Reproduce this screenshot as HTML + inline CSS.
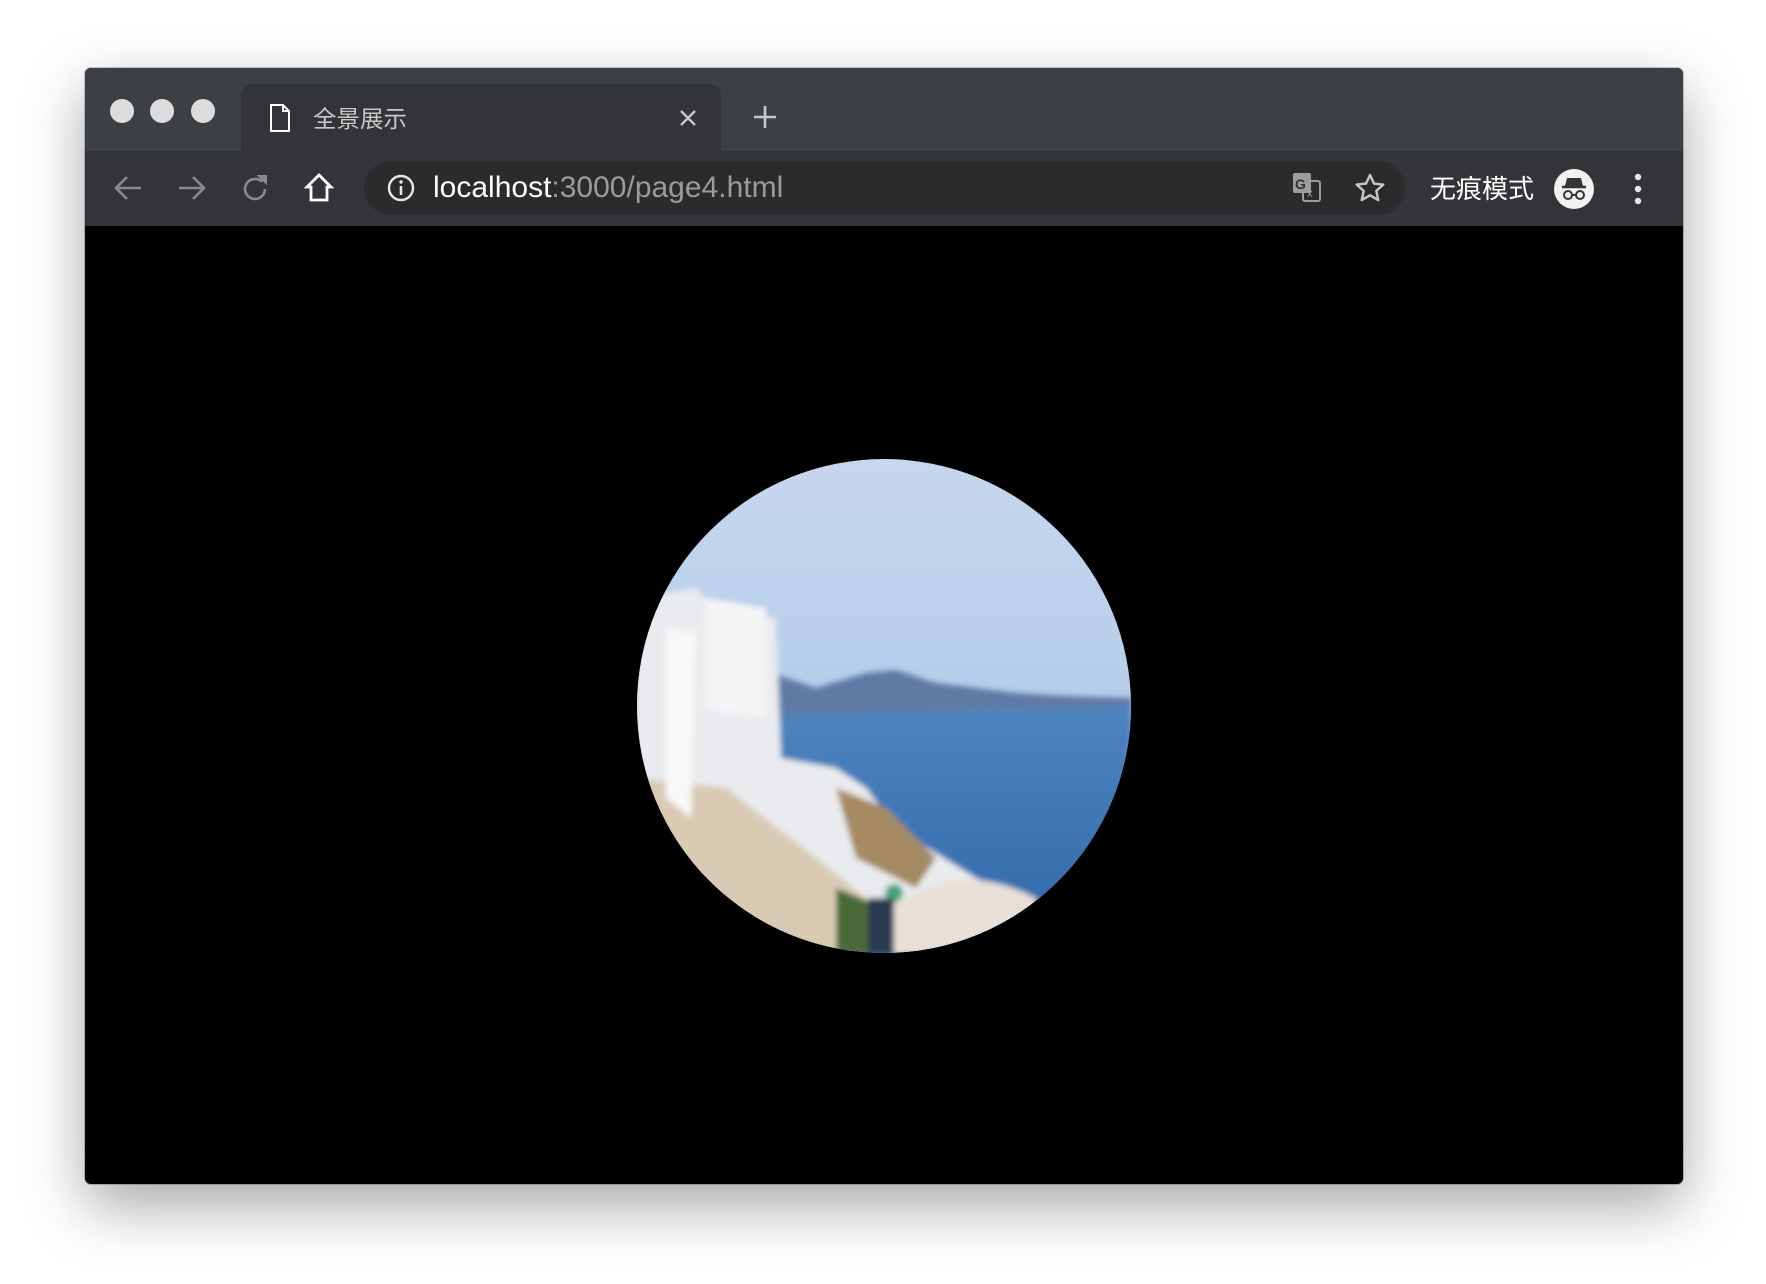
<!DOCTYPE html>
<html><head><meta charset="utf-8"><style>
*{margin:0;padding:0;box-sizing:border-box}
body{width:1766px;height:1284px;background:#fff;position:relative;overflow:hidden;font-family:"Liberation Sans","Noto Sans CJK SC",sans-serif}
.win{position:absolute;left:85px;top:68px;width:1598px;height:1116px;background:#000;border-radius:6px;overflow:hidden;box-shadow:0 22px 60px rgba(0,0,0,.35),0 0 0 1px rgba(0,0,0,.2)}
.title{position:absolute;left:0;top:0;width:100%;height:83px;background:#3c3f43}
.tl{position:absolute;top:99px;width:24px;height:24px;border-radius:50%;background:#dcdcdc}
.tab{position:absolute;left:156px;top:16px;width:480px;height:67px;background:#323437;border-radius:12px 12px 0 0}
.tool{position:absolute;left:0;top:83px;width:100%;height:75px;background:#323437}
.url{position:absolute;left:279px;top:93px;width:1041px;height:54px;background:#2a2b2d;border-radius:27px}
.ab{position:absolute}
</style></head><body>
<div class="win">
<div class="title"></div>
<div class="tl" style="left:25px;top:31px"></div>
<div class="tl" style="left:65px;top:31px"></div>
<div class="tl" style="left:106px;top:31px"></div>
<div class="tab"></div>
<svg class="ab" style="left:184px;top:35px" width="22" height="30" viewBox="0 0 22 30"><path d="M2 2h12l6 6v20H2z M14 2v6h6" fill="none" stroke="#fff" stroke-width="2"/></svg>
<div class="ab" style="left:228px;top:32px;font-size:23.5px;color:#c8c8c8">全景展示</div>
<svg class="ab" style="left:592px;top:39px" width="22" height="22"><path d="M4 4L18 18M18 4L4 18" stroke="#c8c8c8" stroke-width="2.4"/></svg>
<svg class="ab" style="left:666px;top:35px" width="28" height="28"><path d="M14 3v22M3 14h22" stroke="#c8c8c8" stroke-width="2.6"/></svg>
<div class="tool"></div>
<div class="url"></div>
<svg class="ab" style="left:26px;top:106px" width="34" height="28"><path d="M30 14H6M16 3L5 14l11 11" fill="none" stroke="#8a8b8d" stroke-width="2.6"/></svg>
<svg class="ab" style="left:90px;top:106px" width="34" height="28"><path d="M4 14h24M18 3l11 11-11 11" fill="none" stroke="#8a8b8d" stroke-width="2.6"/></svg>
<svg class="ab" style="left:155px;top:105px" width="32" height="32"><path d="M25 16a10 10 0 1 1-3-7.2" fill="none" stroke="#8a8b8d" stroke-width="2.6"/><path d="M19 3h7v7z" fill="#8a8b8d" stroke="#8a8b8d" stroke-width="2"/></svg>
<svg class="ab" style="left:218px;top:104px" width="32" height="32"><path d="M16 3L4 15h4v13h16V15h4z" fill="none" stroke="#fff" stroke-width="2.8" stroke-linejoin="miter"/></svg>
<svg class="ab" style="left:301px;top:105px" width="30" height="30"><circle cx="15" cy="15" r="12" fill="none" stroke="#e8e8e8" stroke-width="2.4"/><path d="M15 13v9" stroke="#e8e8e8" stroke-width="2.6"/><circle cx="15" cy="9" r="1.7" fill="#e8e8e8"/></svg>
<div class="ab" style="left:348px;top:103px;font-size:30px;color:#fff">localhost<span style="color:#9a9b9d">:3000/page4.html</span></div>
<svg class="ab" style="left:1207px;top:104px" width="30" height="32"><rect x="1" y="1" width="18" height="20" rx="2" fill="#9c9d9f"/><rect x="11" y="9" width="17" height="20" rx="2" fill="none" stroke="#9c9d9f" stroke-width="2"/><text x="3" y="17" font-size="14" font-weight="bold" fill="#323437" font-family="Liberation Sans">G</text><text x="15" y="25" font-size="11" fill="#9c9d9f" font-family="Liberation Sans">x</text></svg>
<svg class="ab" style="left:1269px;top:104px" width="32" height="32"><path d="M16 3l4 8.6 9.3 1-7 6.3 2 9.2L16 23.3 7.7 28.1l2-9.2-7-6.3 9.3-1z" fill="none" stroke="#c8c8c8" stroke-width="2.4" stroke-linejoin="round"/></svg>
<div class="ab" style="left:1345px;top:101px;font-size:26px;color:#fff">无痕模式</div>
<svg class="ab" style="left:1469px;top:101px" width="40" height="40"><circle cx="20" cy="20" r="20" fill="#f1f1f1"/><path d="M13 9h14l2 8H11z" fill="#323437"/><path d="M8 18h24" stroke="#323437" stroke-width="2.5"/><circle cx="14" cy="26" r="4" fill="none" stroke="#323437" stroke-width="2"/><circle cx="26" cy="26" r="4" fill="none" stroke="#323437" stroke-width="2"/><path d="M18 26h4" stroke="#323437" stroke-width="2"/></svg>
<svg class="ab" style="left:1545px;top:104px" width="16" height="34"><circle cx="8" cy="5" r="3.2" fill="#e8e8e8"/><circle cx="8" cy="17" r="3.2" fill="#e8e8e8"/><circle cx="8" cy="29" r="3.2" fill="#e8e8e8"/></svg>
<svg class="ab" style="left:551px;top:390px" width="496" height="496" viewBox="0 0 496 496">
<defs>
<clipPath id="c"><circle cx="248" cy="248" r="247"/></clipPath>
<linearGradient id="sky" x1="0" y1="0" x2="0" y2="1"><stop offset="0" stop-color="#c6d7ee"/><stop offset=".5" stop-color="#b4cdea"/><stop offset="1" stop-color="#c3d6ec"/></linearGradient>
<linearGradient id="sea" x1="0" y1="0" x2="0" y2="1"><stop offset="0" stop-color="#4f86c0"/><stop offset="1" stop-color="#2d66a8"/></linearGradient>
<filter id="b"><feGaussianBlur stdDeviation="3"/></filter>
</defs>
<g clip-path="url(#c)">
<rect width="496" height="496" fill="url(#sky)"/>
<g filter="url(#b)">
<rect x="0" y="240" width="496" height="260" fill="url(#sea)"/>
<path d="M130 213 L180 230 L230 215 L260 212 L300 225 L380 235 L430 238 L496 240 L496 248 L130 258z" fill="#5f7aa5"/>
<path d="M0 140 L60 130 L80 150 L140 160 L145 300 L200 310 L230 330 L260 370 L300 395 L340 420 L380 440 L420 455 L440 496 L0 496z" fill="#e9ebee"/>
<path d="M0 320 L90 330 L180 400 L230 440 L260 496 L0 496z" fill="#d9cbb3"/>
<path d="M200 330 L250 350 L300 400 L280 430 L220 400z" fill="#a58a62"/>
<path d="M200 430 L250 450 L270 496 L200 496z" fill="#4b6a3a"/>
<path d="M30 170 L60 175 L55 360 L30 340z" fill="#f8f8f8"/>
<path d="M70 140 L130 150 L130 260 L70 250z" fill="#f4f5f7"/>
<path d="M250 450 C300 420 340 410 400 440 L400 496 L250 496z" fill="#e8e0d8"/>
<circle cx="258" cy="435" r="9" fill="#3fa57a"/>
<rect x="232" y="440" width="26" height="56" fill="#2b3b4f"/>
</g>
</g>
</svg>
</div>
</body></html>
